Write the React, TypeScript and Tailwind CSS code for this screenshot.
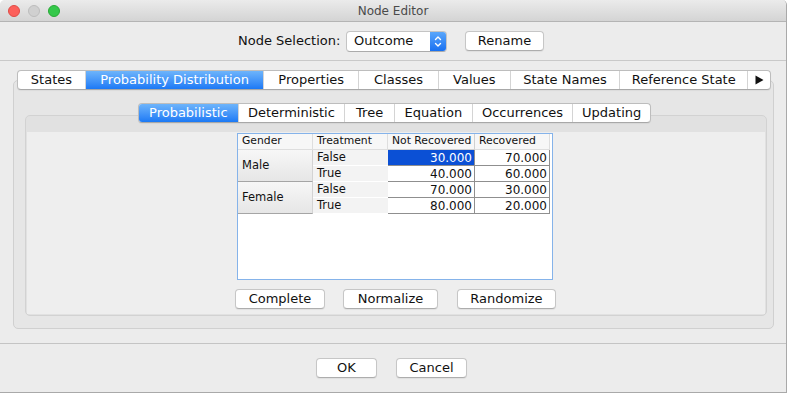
import { Fragment, ReactNode } from "react";

const mainTabs = [
  { label: "States", w: "w-[67px]" },
  { label: "Probability Distribution", w: "w-[179px]", active: true },
  { label: "Properties", w: "w-[95px]" },
  { label: "Classes", w: "w-[80px]" },
  { label: "Values", w: "w-[72px]" },
  { label: "State Names", w: "w-[110px]" },
  { label: "Reference State", w: "w-[128px]" },
];

const subTabs = [
  { label: "Probabilistic", w: "w-[99px]", active: true },
  { label: "Deterministic", w: "w-[107px]" },
  { label: "Tree", w: "w-[50px]" },
  { label: "Equation", w: "w-[78px]" },
  { label: "Occurrences", w: "w-[101px]" },
  { label: "Updating", w: "w-[78px]" },
];

const rows = [
  { treatment: "False", a: "30.000", b: "70.000", selected: true },
  { treatment: "True", a: "40.000", b: "60.000" },
  { treatment: "False", a: "70.000", b: "30.000" },
  { treatment: "True", a: "80.000", b: "20.000" },
];

function Button({ children, w }: { children: ReactNode; w: string }) {
  return (
    <div
      className={`${w} h-[20px] flex items-center justify-center bg-white border border-[#c6c6c6] border-b-[#adadad] rounded-[4px] shadow-[0_1px_1px_rgba(0,0,0,0.06)] text-[13px] text-[#111]`}
    >
      {children}
    </div>
  );
}

function TabBar({ tabs, extra }: { tabs: { label: string; w: string; active?: boolean }[]; extra?: ReactNode }) {
  return (
    <div className="relative z-10 flex h-[20px] bg-white border border-[#bdbdbd] border-b-[#a8a8a8] rounded-[4px] overflow-hidden shadow-[0_1px_1px_rgba(0,0,0,0.05)]">
      {tabs.map((t, i) => (
        <div
          key={t.label}
          className={`${t.w} flex items-center justify-center text-[13px] ${
            t.active
              ? "bg-linear-to-b from-[#6db4fb] to-[#1b79f5] text-white"
              : "text-[#111]"
          } ${i > 0 ? "border-l border-[#d4d4d4]" : ""}`}
        >
          {t.label}
        </div>
      ))}
      {extra}
    </div>
  );
}

export default function App() {
  return (
    <div className="w-[789px] h-[394px] bg-white font-['DejaVu_Sans',sans-serif]">
      <div className="w-[787px] h-[393px] flex flex-col bg-[#ececec] border-r border-b border-[#a9a9a9] rounded-t-[5px] overflow-hidden">
        {/* title bar */}
        <div className="relative h-[22px] shrink-0 flex items-center justify-center bg-linear-to-b from-[#ebebeb] to-[#d4d4d4] border-b border-[#b4b4b4]">
          <div className="absolute left-[8px] top-[5px] flex gap-[8px]">
            <span className="w-[12px] h-[12px] rounded-full bg-[#fc605b] border border-[#de4b46]" />
            <span className="w-[12px] h-[12px] rounded-full bg-[#d0d0d0] border border-[#bcbcbc]" />
            <span className="w-[12px] h-[12px] rounded-full bg-[#34c84a] border border-[#28a936]" />
          </div>
          <span className="text-[12px] text-[#4a4a4a]">Node Editor</span>
        </div>

        {/* node selection */}
        <div className="h-[39px] shrink-0 flex items-center pl-[238px] border-b border-[#c9c9c9]">
          <span className="w-[101px] text-[13px] text-[#111] mr-[7px] whitespace-nowrap">Node Selection:</span>
          <div className="w-[101px] h-[21px] flex bg-white border border-[#c4c4c4] border-b-[#ababab] rounded-[4px] overflow-hidden">
            <span className="flex-1 pl-[7px] flex items-center text-[13px] text-[#111]">Outcome</span>
            <span className="w-[16px] flex items-center justify-center bg-linear-to-b from-[#59a6fb] to-[#1670f1]">
              <svg width="8" height="13" viewBox="0 0 8 13" fill="none" stroke="white" strokeWidth="1.4" strokeLinecap="round" strokeLinejoin="round">
                <path d="M1.5 4.5 L4 2 L6.5 4.5" />
                <path d="M1.5 8.5 L4 11 L6.5 8.5" />
              </svg>
            </span>
          </div>
          <div className="ml-[18px]">
            <Button w="w-[79px]">Rename</Button>
          </div>
        </div>

        {/* tabbed content */}
        <div className="h-[283px] shrink-0 pt-[9px] border-b border-[#c4c4c4]">
          <div className="ml-[17px] w-[754px]">
            <TabBar
              tabs={mainTabs}
              extra={
                <div className="w-[23px] flex items-center justify-center border-l border-[#d4d4d4]">
                  <svg width="9" height="10" viewBox="0 0 9 10">
                    <path d="M0.5 0.5 L8.5 5 L0.5 9.5 Z" fill="#111" />
                  </svg>
                </div>
              }
            />
          </div>
          <div className="-mt-[10px] ml-[13px] w-[761px] h-[249px] bg-[#e6e6e6] border border-[#d0d0d0] rounded-[5px] pt-[22px]">
            <div className="ml-[124px] w-[513px]">
              <TabBar tabs={subTabs} />
            </div>
            <div className="-mt-[8px] ml-[11px] w-[742px] h-[201px] bg-[#e1e1e1] border border-[#d2d2d2] rounded-[5px] pt-[16px] px-[1px] pb-[1px]">
              <div className="h-full bg-[#eeeeee] pt-[1px]">
                {/* table */}
                <div className="ml-[210px] w-[316px] h-[147px] bg-white border border-[#85b3ea]">
                  <div className="grid grid-cols-[75px_75px_87px_75px] grid-rows-[16px_16px_16px_16px_16px] text-[#111]">
                    <div className="pl-[4px] flex items-center text-[10.8px] bg-[#f7f7f7] border-r border-b border-[#dedede]">Gender</div>
                    <div className="pl-[4px] flex items-center text-[10.8px] bg-[#f7f7f7] border-r border-b border-[#dedede]">Treatment</div>
                    <div className="pl-[4px] flex items-center text-[10.8px] bg-[#f7f7f7] border-r border-b border-[#d0d0d0]">Not Recovered</div>
                    <div className="pl-[4px] flex items-center text-[10.8px] bg-[#f7f7f7] border-r border-b border-[#dedede]">Recovered</div>
                    {rows.map((r, i) => (
                      <Fragment key={i}>
                        {i % 2 === 0 && (
                          <div className="row-span-2 pl-[4px] flex items-center text-[11.5px] bg-linear-to-b from-[#f7f7f7] to-[#e6e6e6] border-b border-r border-b-[#a5a5a5] border-r-[#d3d3d3]">
                            {i === 0 ? "Male" : "Female"}
                          </div>
                        )}
                        <div className="pl-[4px] flex items-center text-[11.5px] bg-[#f3f3f3] border-b border-white">
                          {r.treatment}
                        </div>
                        <div
                          className={`pr-[2px] flex items-center justify-end text-[12px] border-r border-b border-[#8f8f8f] ${
                            r.selected ? "bg-[#0b50d5] text-white" : ""
                          }`}
                        >
                          {r.a}
                        </div>
                        <div className="pr-[2px] flex items-center justify-end text-[12px] border-r border-b border-[#8f8f8f]">
                          {r.b}
                        </div>
                      </Fragment>
                    ))}
                  </div>
                </div>
                {/* actions */}
                <div className="ml-[208px] mt-[9px] flex">
                  <Button w="w-[90px]">Complete</Button>
                  <div className="ml-[18px]">
                    <Button w="w-[95px]">Normalize</Button>
                  </div>
                  <div className="ml-[19px]">
                    <Button w="w-[99px]">Randomize</Button>
                  </div>
                </div>
              </div>
            </div>
          </div>
        </div>

        {/* dialog buttons */}
        <div className="flex-1 flex items-center pl-[316px] gap-[19px]">
          <Button w="w-[61px]">OK</Button>
          <Button w="w-[71px]">Cancel</Button>
        </div>
      </div>
    </div>
  );
}
